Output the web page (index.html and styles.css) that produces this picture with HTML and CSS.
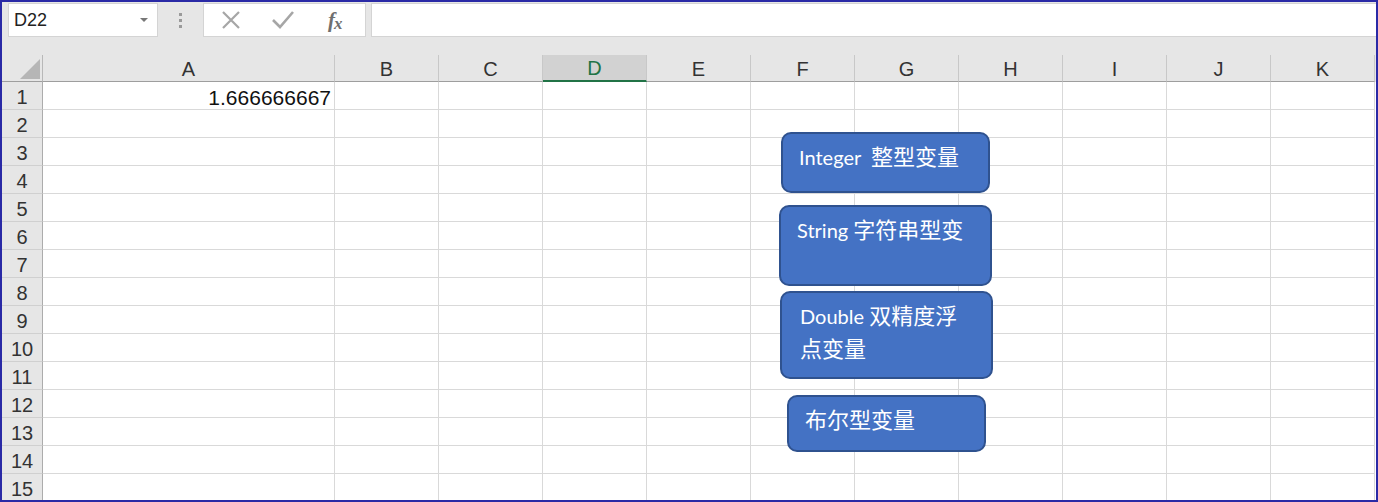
FILE: index.html
```html
<!DOCTYPE html>
<html lang="zh">
<head>
<meta charset="utf-8">
<title>Excel</title>
<link rel="stylesheet" href="styles.css">
</head>
<body>
<div class="frame">
  <div class="toolbar">
    <div class="namebox"><span class="name">D22</span><span class="dd"></span></div>
    <div class="grip"><i></i><i></i><i></i></div>
    <div class="fxbox">
      <svg class="ic" width="22" height="22" viewBox="0 0 22 22"><path d="M3 3 L19 19 M19 3 L3 19" stroke="#a6a6a6" stroke-width="2.2" fill="none"/></svg>
      <svg class="ic" width="24" height="22" viewBox="0 0 24 22"><path d="M2 11 L9 18 L22 3" stroke="#a6a6a6" stroke-width="2.6" fill="none"/></svg>
      <span class="fx">f<sub>x</sub></span>
    </div>
    <div class="formula"></div>
  </div>
  <div class="sheet">
    <div class="corner"><span class="tri"></span></div>
    <div class="ch">A</div><div class="ch">B</div><div class="ch">C</div><div class="ch sel">D</div><div class="ch">E</div><div class="ch">F</div><div class="ch">G</div><div class="ch">H</div><div class="ch">I</div><div class="ch">J</div><div class="ch">K</div>
  </div>
  <div class="sheet rows" id="rows"></div>
  <div class="shape s1">Integer&nbsp; <span class="cjk">整型变量</span></div>
  <div class="shape s2">String <span class="cjk">字符串型变</span></div>
  <div class="shape s3">Double <span class="cjk">双精度浮</span><br><span class="cjk">点变量</span></div>
  <div class="shape s4"><span class="cjk">布尔型变量</span></div>
</div>
<script src="app.js"></script>
</body>
</html>
```
FILE: app.js
```js
var rows = document.getElementById('rows');
var html = '';
for (var r = 1; r <= 15; r++) {
  html += '<div class="rh">' + r + '</div>';
  for (var c = 0; c < 11; c++) {
    var t = (r === 1 && c === 0) ? '1.666666667' : '';
    html += '<div class="cell' + (c === 0 ? ' num' : '') + '">' + t + '</div>';
  }
}
rows.innerHTML = html;
```
FILE: styles.css
```css
html, body { margin: 0; padding: 0; background: #fff; }
.frame {
  position: relative;
  width: 1378px; height: 502px;
  box-sizing: border-box;
  border: 2px solid #2a2aa6;
  background: #e6e6e6;
  overflow: hidden;
  font-family: "Liberation Sans", "Noto Sans CJK SC", sans-serif;
}
.toolbar {
  display: flex; align-items: flex-start;
  height: 36px; padding-top: 1px; box-sizing: border-box;
}
.namebox {
  margin-left: 6px; width: 150px; height: 34px; box-sizing: border-box;
  background: #fff; border: 1px solid #d4d4d4;
  display: flex; align-items: center; justify-content: space-between;
  padding: 0 9px 0 5px;
}
.name { font-size: 18px; color: #222; }
.dd { width: 0; height: 0; border-left: 4px solid transparent; border-right: 4px solid transparent; border-top: 4px solid #777; }
.grip { width: 45px; height: 34px; display: flex; flex-direction: column; align-items: center; justify-content: center; gap: 3px; }
.grip i { display: block; width: 3px; height: 3px; background: #9a9a9a; }
.fxbox {
  width: 163px; height: 34px; box-sizing: border-box; background: #fff; border: 1px solid #d4d4d4;
  display: flex; align-items: center; padding-left: 16px; gap: 29px;
}
.fx { font-family: "Liberation Serif", serif; font-style: italic; font-weight: bold; font-size: 21px; color: #6f6f6f; margin-left: 4px; letter-spacing: -1px; }
.fx sub { font-size: 17px; vertical-align: baseline; position: relative; top: 2px; }
.formula { margin-left: 5px; flex: 1; height: 34px; box-sizing: border-box; background: #fff; border: 1px solid #d4d4d4; border-right: none; }
.sheet {
  display: grid;
  grid-template-columns: 41px 292px repeat(10, 104px);
  margin-top: 17px;
}
.sheet.rows { margin-top: 0; grid-auto-rows: 28px; background: #fff; }
.corner { height: 27px; box-sizing: border-box; border-right: 1px solid #b8b8b8; border-bottom: 1px solid #9e9e9e; position: relative; }
.tri { position: absolute; right: 2px; bottom: 2px; width: 0; height: 0; border-left: 20px solid transparent; border-bottom: 20px solid #b6b6b6; }
.ch {
  height: 27px; box-sizing: border-box; border-bottom: 1px solid #9e9e9e;
  border-right: 1px solid #c8c8c8;
  display: flex; align-items: center; justify-content: center;
  font-size: 20px; color: #333; padding-top: 2px;
}
.ch.sel { background: #d2d2d2; color: #217346; border-bottom: 2px solid #217346; }
.rh {
  background: #e6e6e6; box-sizing: border-box;
  border-right: 1px solid #acacac; border-bottom: 1px solid #d0d0d0;
  display: flex; align-items: center; justify-content: center;
  font-size: 20px; color: #333; padding-top: 3px;
}
.cell { box-sizing: border-box; border-right: 1px solid #d9d9d9; border-bottom: 1px solid #d9d9d9; }
.cell.num { text-align: right; padding-right: 3px; font-size: 21px; line-height: 32px; color: #111; }
.shape {
  position: absolute; box-sizing: border-box;
  background: #4472c4; border: 2px solid #2f528f; border-radius: 10px;
  color: #fff; font-family: "Lato", "Noto Sans CJK SC", sans-serif; font-size: 20px;
  line-height: 31px; padding: 6px 8px 0 16px;
}
.cjk { font-family: "Noto Sans CJK SC", sans-serif; font-size: 22px; }
.s1 { left: 779px; top: 130px; width: 209px; height: 61px; }
.s2 { left: 777px; top: 203px; width: 213px; height: 81px; }
.s3 { left: 778px; top: 289px; width: 213px; height: 88px; padding-left: 18px; }
.s4 { left: 785px; top: 393px; width: 199px; height: 57px; }
```
